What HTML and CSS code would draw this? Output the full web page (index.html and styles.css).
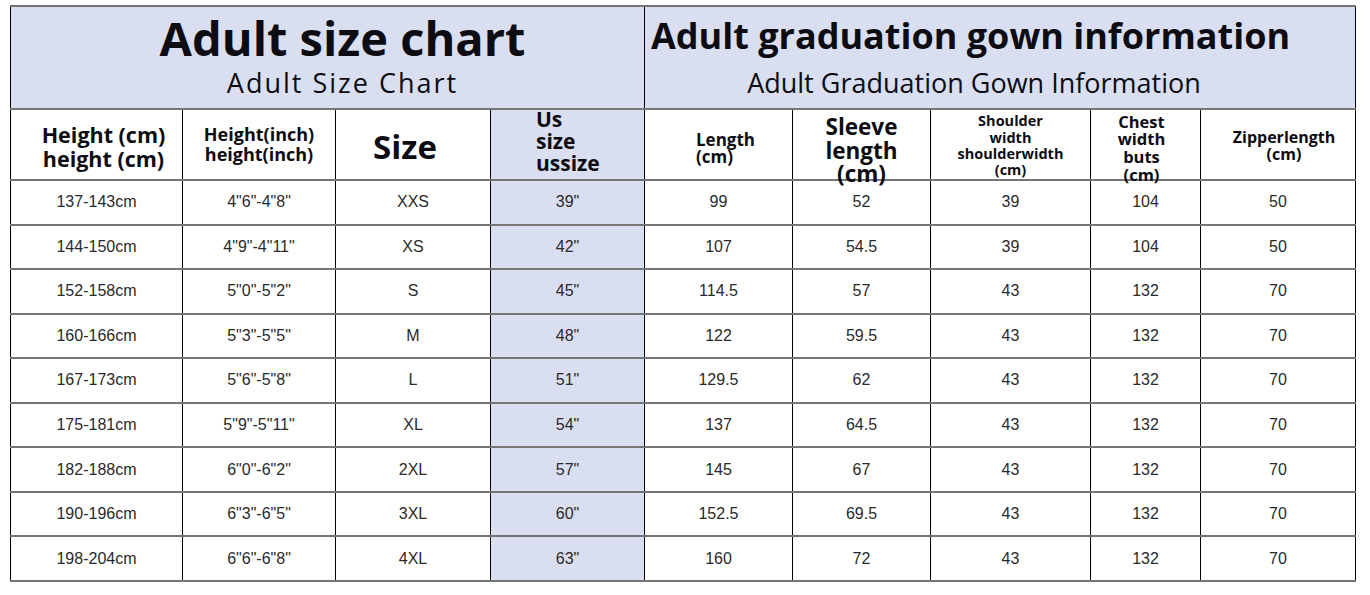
FILE: index.html
```html
<!DOCTYPE html>
<html>
<head>
<meta charset="utf-8">
<link rel="stylesheet" href="styles.css">
</head>
<body>
<table class="chart">
  <colgroup>
    <col class="c1"><col class="c2"><col class="c3"><col class="c4"><col class="c5"><col class="c6"><col class="c7"><col class="c8"><col class="c9">
  </colgroup>
  <tr class="title-row">
    <td colspan="4" class="title left-title">
      <div class="title-main">Adult size chart</div>
      <div class="title-sub spaced">Adult Size Chart</div>
    </td>
    <td colspan="5" class="title right-title">
      <div class="title-main">Adult graduation gown information</div>
      <div class="title-sub narrow">Adult Graduation Gown Information</div>
    </td>
  </tr>
  <tr class="head-row">
    <th class="h-height"><div class="hw"><div class="hi">Height (cm)<br>height (cm)</div></div></th>
    <th class="h-inch"><div class="hw"><div class="hi">Height(inch)<br>height(inch)</div></div></th>
    <th class="h-size"><div class="hw"><div class="hi">Size</div></div></th>
    <th class="h-us shade"><div class="hw"><div class="hi">Us<br>size<br>ussize</div></div></th>
    <th class="h-length"><div class="hw"><div class="hi">Length<br>(cm)</div></div></th>
    <th class="h-sleeve"><div class="hw"><div class="hi">Sleeve<br>length<br>(cm)</div></div></th>
    <th class="h-shoulder"><div class="hw"><div class="hi">Shoulder<br>width<br>shoulderwidth<br>(cm)</div></div></th>
    <th class="h-chest"><div class="hw"><div class="hi">Chest<br>width<br>buts<br>(cm)</div></div></th>
    <th class="h-zip"><div class="hw"><div class="hi">Zipperlength<br>(cm)</div></div></th>
  </tr>
  <tr><td>137-143cm</td><td>4"6"-4"8"</td><td>XXS</td><td class="shade">39"</td><td>99</td><td>52</td><td>39</td><td>104</td><td>50</td></tr>
  <tr><td>144-150cm</td><td>4"9"-4"11"</td><td>XS</td><td class="shade">42"</td><td>107</td><td>54.5</td><td>39</td><td>104</td><td>50</td></tr>
  <tr><td>152-158cm</td><td>5"0"-5"2"</td><td>S</td><td class="shade">45"</td><td>114.5</td><td>57</td><td>43</td><td>132</td><td>70</td></tr>
  <tr><td>160-166cm</td><td>5"3"-5"5"</td><td>M</td><td class="shade">48"</td><td>122</td><td>59.5</td><td>43</td><td>132</td><td>70</td></tr>
  <tr><td>167-173cm</td><td>5"6"-5"8"</td><td>L</td><td class="shade">51"</td><td>129.5</td><td>62</td><td>43</td><td>132</td><td>70</td></tr>
  <tr><td>175-181cm</td><td>5"9"-5"11"</td><td>XL</td><td class="shade">54"</td><td>137</td><td>64.5</td><td>43</td><td>132</td><td>70</td></tr>
  <tr><td>182-188cm</td><td>6"0"-6"2"</td><td>2XL</td><td class="shade">57"</td><td>145</td><td>67</td><td>43</td><td>132</td><td>70</td></tr>
  <tr><td>190-196cm</td><td>6"3"-6"5"</td><td>3XL</td><td class="shade">60"</td><td>152.5</td><td>69.5</td><td>43</td><td>132</td><td>70</td></tr>
  <tr><td>198-204cm</td><td>6"6"-6"8"</td><td>4XL</td><td class="shade">63"</td><td>160</td><td>72</td><td>43</td><td>132</td><td>70</td></tr>
</table>
</body>
</html>
```

FILE: styles.css
```css
html, body {
  margin: 0;
  padding: 0;
  background: #ffffff;
}
body {
  padding: 5px 0 0 10px;
}
.chart {
  border-collapse: collapse;
  table-layout: fixed;
  width: 1345px;
  font-family: "Liberation Sans", Arial, sans-serif;
  color: #2a2a2a;
}
.c1 { width: 172px; }
.c2 { width: 153px; }
.c3 { width: 155px; }
.c4 { width: 154px; }
.c5 { width: 148px; }
.c6 { width: 138px; }
.c7 { width: 160px; }
.c8 { width: 110px; }
.c9 { width: 155px; }

.chart td, .chart th {
  border-top: 2px solid #757575;
  border-bottom: 2px solid #757575;
  border-left: 1px solid #000;
  border-right: 1px solid #000;
  padding: 0;
  text-align: center;
  vertical-align: middle;
  font-size: 16px;
  line-height: 18px;
}
.chart tr { height: 44.55px; }

.shade { background: #d9dff1; }

.chart .title-row { height: 103px; }
.title {
  background: #d9dff1;
  color: #0c0c12;
}
.chart .title { vertical-align: top; }
.title-main {
  font-family: "Open Sans", "Noto Sans", sans-serif;
  font-weight: 700;
}
.title-sub {
  font-family: "Open Sans", "Noto Sans", sans-serif;
  font-weight: 400;
}
.chart .left-title { padding-left: 30px; }
.left-title .title-main {
  font-size: 47px;
  line-height: 56px;
  margin-top: 3px;
}
.left-title .title-sub {
  font-size: 27px;
  line-height: 34px;
  letter-spacing: 2px;
}
.right-title .title-main {
  font-size: 36px;
  line-height: 46px;
  margin-top: 6px;
  text-align: left;
  padding-left: 6px;
}
.right-title .title-sub {
  font-size: 27px;
  line-height: 36px;
  margin-top: 6px;
  padding-right: 52px;
}

.chart .head-row { height: 71px; }
.head-row th {
  font-family: "Open Sans", "Noto Sans", sans-serif;
  font-weight: 700;
  color: #0c0c12;
}
.hw {
  height: 68px;
  display: flex;
  flex-direction: column;
  justify-content: center;
}
.hi { white-space: nowrap; }

.chart .h-height { font-size: 21.5px; line-height: 24px; padding-left: 14px; }
.h-height .hi { margin-top: 4px; }
.chart .h-inch { font-size: 18px; line-height: 20px; }
.h-inch .hi { margin-top: -2px; }
.chart .h-size { font-size: 33px; line-height: 38px; padding-right: 16px; }
.h-size .hi { margin-top: 4px; }
.chart .h-us { font-size: 21px; line-height: 22px; text-align: left; padding-left: 45px; }
.h-us .hi { margin-top: -8px; }
.chart .h-length { font-size: 17px; line-height: 17px; text-align: left; padding-left: 51px; }
.h-length .hi { margin-top: 7px; }
.chart .h-sleeve { font-size: 22.5px; line-height: 23.5px; }
.h-sleeve .hi { margin-top: 12px; }
.chart .h-shoulder { font-size: 14.5px; line-height: 16.3px; }
.h-shoulder .hi { margin-top: 3px; }
.chart .h-chest { font-size: 16.5px; line-height: 17.7px; padding-right: 8px; }
.h-chest .hi { margin-top: 7px; }
.chart .h-zip { font-size: 16px; line-height: 17px; padding-left: 12px; }
.h-zip .hi { margin-top: 3px; }
```
